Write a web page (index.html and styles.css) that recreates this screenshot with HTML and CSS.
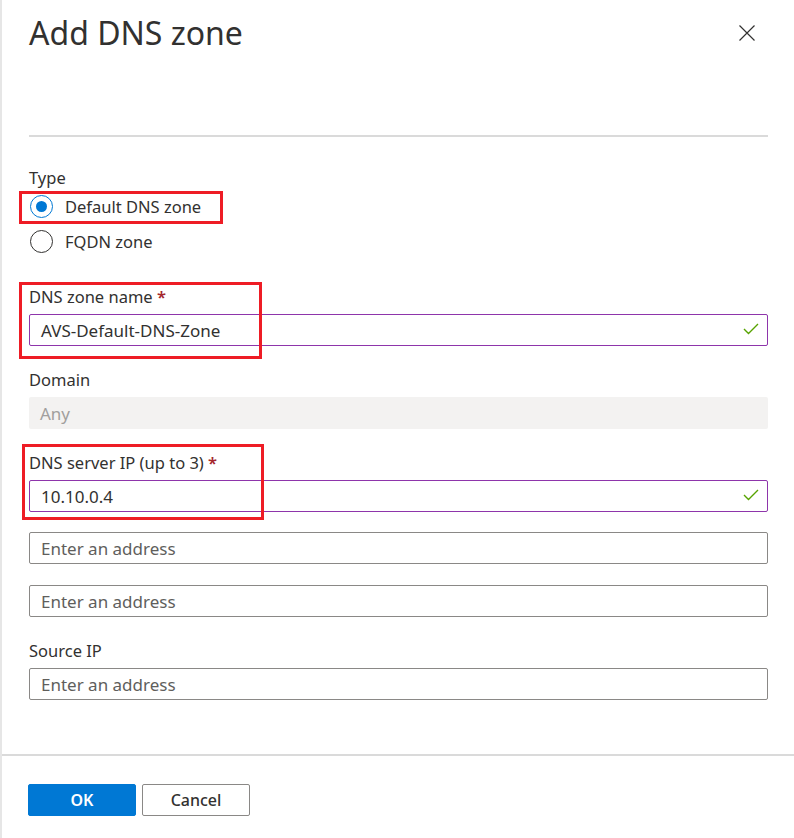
FILE: index.html
```html
<!DOCTYPE html>
<html>
<head>
<meta charset="utf-8">
<link rel="stylesheet" href="styles.css">
</head>
<body>
<div class="panel">
  <div class="header">
    <h1 class="title">Add DNS zone</h1>
    <button class="close" aria-label="Close">
      <svg width="16" height="16" viewBox="0 0 16 16"><path d="M0.5 0.5 L15.5 15.5 M15.5 0.5 L0.5 15.5" stroke="#323130" stroke-width="1.2" fill="none"/></svg>
    </button>
  </div>
  <div class="content">
    <div class="divider"></div>
    <div class="type-label">Type</div>
    <div class="radio-row"><span class="radio checked"></span><span>Default DNS zone</span></div>
    <div class="radio-row"><span class="radio"></span><span>FQDN zone</span></div>

    <div class="field first">
      <div class="label">DNS zone name <span class="req">*</span></div>
      <div class="input valid"><span>AVS-Default-DNS-Zone</span>
        <svg class="check" width="16" height="12" viewBox="0 0 16 12"><path d="M1 6 L5.5 10.5 L15 1" stroke="#57a300" stroke-width="1.4" fill="none"/></svg>
      </div>
    </div>

    <div class="field">
      <div class="label">Domain</div>
      <div class="input disabled"><span>Any</span></div>
    </div>

    <div class="field">
      <div class="label">DNS server IP (up to 3) <span class="req">*</span></div>
      <div class="input valid"><span>10.10.0.4</span>
        <svg class="check" width="16" height="12" viewBox="0 0 16 12"><path d="M1 6 L5.5 10.5 L15 1" stroke="#57a300" stroke-width="1.4" fill="none"/></svg>
      </div>
      <div class="input placeholder extra"><span>Enter an address</span></div>
      <div class="input placeholder extra2"><span>Enter an address</span></div>
    </div>

    <div class="field">
      <div class="label">Source IP</div>
      <div class="input placeholder"><span>Enter an address</span></div>
    </div>
  </div>
  <div class="footer">
    <button class="btn primary">OK</button>
    <button class="btn">Cancel</button>
  </div>

  <div class="mark m1"></div>
  <div class="mark m2"></div>
  <div class="mark m3"></div>
</div>
</body>
</html>
```

FILE: styles.css
```css
* { box-sizing: border-box; }
html, body { margin: 0; padding: 0; background: #fff; }
body {
  font-family: "Noto Sans", "Open Sans", sans-serif;
  color: #323130;
  font-size: 16.5px;
}
.panel {
  position: relative;
  width: 794px;
  height: 838px;
  border-left: 2px solid #e6e6e6;
  display: flex;
  flex-direction: column;
}
.header {
  display: flex;
  justify-content: space-between;
  align-items: flex-start;
  padding: 13px 39px 0 27px;
}
.title {
  margin: 0;
  font-size: 32px;
  font-weight: 400;
  line-height: 40px;
}
.close {
  border: 0;
  background: none;
  padding: 0;
  margin-top: 12px;
  width: 16px;
  height: 16px;
  display: block;
}
.close svg { display: block; }
.content {
  padding: 0 26px 0 27px;
  flex: 1;
}
.divider {
  height: 2px;
  background: #dadada;
  margin-top: 82px;
}
.type-label {
  line-height: 22px;
  margin-top: 30px;
}
.radio-row {
  display: flex;
  align-items: center;
  height: 35px;
  gap: 12px;
  padding-left: 1px;
}
.radio {
  width: 23px;
  height: 23px;
  border-radius: 50%;
  border: 1px solid #323130;
  display: inline-block;
  position: relative;
  flex: none;
}
.radio.checked { border-color: #0078d4; }
.radio.checked::after {
  content: "";
  position: absolute;
  left: 5px;
  top: 5px;
  width: 11px;
  height: 11px;
  border-radius: 50%;
  background: #0078d4;
}
.field { margin-top: 23px; }
.field.first { margin-top: 27px; }
.label {
  line-height: 22px;
  margin-bottom: 6px;
}
.req { color: #a4262c; font-weight: 600; }
.input {
  height: 32px;
  border: 1px solid #8a8886;
  border-radius: 2px;
  display: flex;
  align-items: center;
  justify-content: space-between;
  padding: 0 8px 0 11px;
  font-size: 17px;
}
.input.valid { border-color: #8e35ab; }
.input.disabled { border: 0; background: #f3f2f1; color: #a19f9d; }
.input.placeholder { color: #605e5c; }
.input.extra { margin-top: 20px; }
.input.extra2 { margin-top: 21px; }
.check { display: block; margin-top: -2px; }
.footer {
  border-top: 2px solid #dadada;
  height: 84px;
  padding: 28px 0 0 26px;
  display: flex;
  gap: 6px;
  align-items: flex-start;
}
.btn {
  width: 108px;
  height: 32px;
  border: 1px solid #8a8886;
  border-radius: 2px;
  background: #fff;
  font-family: "Noto Sans", "Open Sans", sans-serif;
  font-size: 16px;
  font-weight: 500;
  color: #323130;
  padding: 0;
}
.btn.primary {
  background: #0078d4;
  border-color: #0078d4;
  color: #fff;
  font-weight: 600;
}
.mark {
  position: absolute;
  border: 3px solid #ee1c25;
}
.m1 { left: 17px; top: 191px; width: 204px; height: 33px; }
.m2 { left: 17px; top: 282px; width: 243px; height: 77px; }
.m3 { left: 20px; top: 444px; width: 242px; height: 76px; }
```
